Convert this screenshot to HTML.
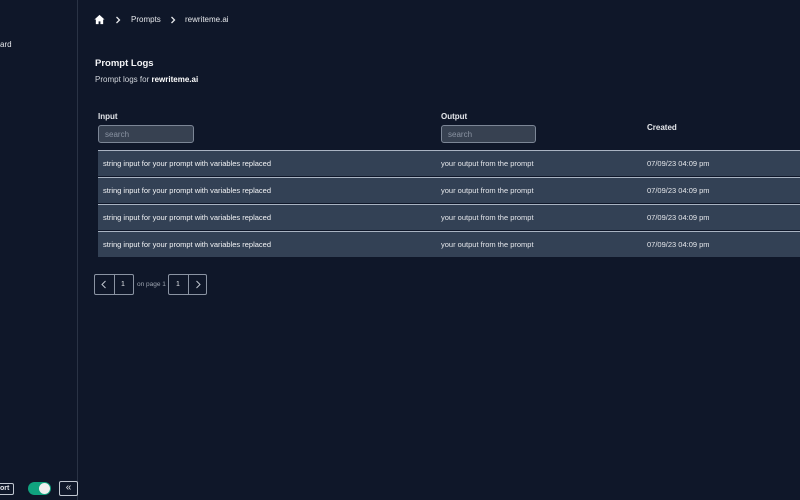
<!DOCTYPE html>
<html><head><style>
*{box-sizing:border-box;margin:0;padding:0}
body{width:800px;height:500px;background:#0f1729;font-family:"Liberation Sans",sans-serif;color:#e5e7eb;position:relative;overflow:hidden}
.abs{position:absolute}
.side{left:0;top:0;width:78px;height:500px;border-right:1px solid #2a3345}
.t{font-size:8px;white-space:nowrap}
.inp{height:18px;border:1px solid #7c8696;border-radius:3px;background:#374151;color:#8a93a2;font-size:8px;padding:4px 6px}
.row{left:98px;width:702px;height:26px;background:#334155;border-top:1px solid #aab4c3}
.row span{position:absolute;top:8px;font-size:7.5px;color:#e5e7eb;white-space:nowrap}
.row span.b{color:#f3f4f6}
.pg{border:1px solid #8a93a2;border-radius:2px;height:21px;top:274px}
</style></head><body>
<div class="abs side"></div>
<div class="abs t" style="left:0;top:40px;color:#e5e7eb">ard</div>
<div class="abs" style="left:-4px;top:483px;width:18px;height:12px;border:1px solid #c0c6d0;border-radius:2px;font-size:7px;font-weight:bold;padding:1px 0 0 3px">ort</div>
<div class="abs" style="left:28px;top:482px;width:23px;height:13px;background:#10a37f;border-radius:7px"><div class="abs" style="right:1px;top:1px;width:11px;height:11px;border-radius:50%;background:#f0f0f0"></div></div>
<div class="abs" style="left:59px;top:481px;width:19px;height:15px;border:1px solid #c0c6d0;border-radius:2px;font-size:10px;text-align:center;line-height:12px">«</div>

<svg class="abs" style="left:94px;top:14px" width="11" height="11" viewBox="0 0 12 12"><path d="M6 1L0.5 6H2v5h3V8h2v3h3V6h1.5z" fill="#fff"/></svg>
<svg class="abs" style="left:115px;top:16px" width="6" height="8"><path d="M1.5 1L4.5 4L1.5 7" stroke="#e5e7eb" stroke-width="1.3" fill="none"/></svg>
<div class="abs t" style="left:131px;top:15px;font-size:8px">Prompts</div>
<svg class="abs" style="left:170px;top:16px" width="6" height="8"><path d="M1.5 1L4.5 4L1.5 7" stroke="#e5e7eb" stroke-width="1.3" fill="none"/></svg>
<div class="abs t" style="left:185px;top:15px">rewriteme.ai</div>

<div class="abs" style="left:95px;top:58px;font-size:9.5px;font-weight:bold;color:#f3f4f6">Prompt Logs</div>
<div class="abs t" style="left:95px;top:75px;color:#d1d5db">Prompt logs for <b style="color:#fff">rewriteme.ai</b></div>

<div class="abs t" style="left:98px;top:112px;font-weight:bold">Input</div>
<div class="abs inp" style="left:98px;top:125px;width:96px">search</div>
<div class="abs t" style="left:441px;top:112px;font-weight:bold">Output</div>
<div class="abs inp" style="left:441px;top:125px;width:95px">search</div>
<div class="abs t" style="left:647px;top:123px;font-weight:bold">Created</div>

<div class="abs row" style="top:150px"><span class="b" style="left:5px">string input for your prompt with variables replaced</span><span style="left:343px">your output from the prompt</span><span style="left:549px">07/09/23 04:09 pm</span></div>
<div class="abs row" style="top:177px"><span class="b" style="left:5px">string input for your prompt with variables replaced</span><span style="left:343px">your output from the prompt</span><span style="left:549px">07/09/23 04:09 pm</span></div>
<div class="abs row" style="top:204px"><span class="b" style="left:5px">string input for your prompt with variables replaced</span><span style="left:343px">your output from the prompt</span><span style="left:549px">07/09/23 04:09 pm</span></div>
<div class="abs row" style="top:231px"><span class="b" style="left:5px">string input for your prompt with variables replaced</span><span style="left:343px">your output from the prompt</span><span style="left:549px">07/09/23 04:09 pm</span></div>

<div class="abs pg" style="left:94px;width:40px"><div class="abs" style="left:19px;top:0;height:19px;border-left:1px solid #8a93a2"></div></div>
<svg class="abs" style="left:100px;top:280px" width="8" height="9"><path d="M5.5 1L2 4.5L5.5 8" stroke="#c0c6d0" fill="none"/></svg>
<div class="abs t" style="left:121px;top:281px;font-size:7px">1</div>
<div class="abs t" style="left:137px;top:281px;font-size:6.5px;color:#9ca3af">on page 1</div>
<div class="abs pg" style="left:168px;width:39px"><div class="abs" style="left:19px;top:0;height:19px;border-left:1px solid #8a93a2"></div></div>
<div class="abs t" style="left:176px;top:281px;font-size:7px">1</div>
<svg class="abs" style="left:194px;top:280px" width="8" height="9"><path d="M2.5 1L6 4.5L2.5 8" stroke="#c0c6d0" fill="none"/></svg>
</body></html>
